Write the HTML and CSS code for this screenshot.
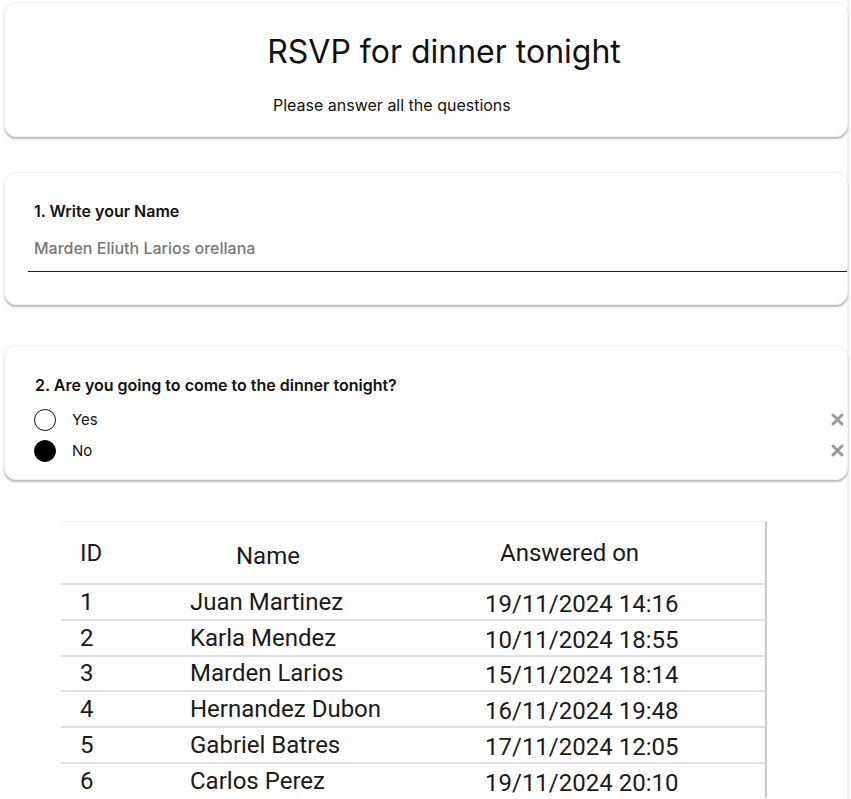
FILE: index.html
```html
<!DOCTYPE html>
<html lang="en">
<head>
<meta charset="utf-8">
<title>RSVP for dinner tonight</title>
<link rel="stylesheet" href="styles.css">
</head>
<body>
<main class="page">
  <section class="card card-head">
    <h1 class="title">RSVP for dinner tonight</h1>
    <p class="subtitle">Please answer all the questions</p>
  </section>

  <section class="card card-q1">
    <label class="q-label">1. Write your Name</label>
    <div class="answer">Marden Eliuth Larios orellana</div>
  </section>

  <section class="card card-q2">
    <div class="q-label">2. Are you going to come to the dinner tonight?</div>
    <div class="option">
      <span class="radio"></span>
      <span class="opt-text">Yes</span>
      <svg class="remove" width="13" height="13" viewBox="0 0 13 13"><path d="M2 2L11 11M11 2L2 11" stroke="#9a9a9a" stroke-width="3" stroke-linecap="round"/></svg>
    </div>
    <div class="option">
      <span class="radio radio-on"></span>
      <span class="opt-text">No</span>
      <svg class="remove" width="13" height="13" viewBox="0 0 13 13"><path d="M2 2L11 11M11 2L2 11" stroke="#9a9a9a" stroke-width="3" stroke-linecap="round"/></svg>
    </div>
  </section>

  <section class="table">
    <div class="row row-head">
      <div class="c c-id">ID</div>
      <div class="c c-name h-name">Name</div>
      <div class="c c-date h-date">Answered on</div>
    </div>
    <div class="row"><div class="c c-id">1</div><div class="c c-name">Juan Martinez</div><div class="c c-date">19/11/2024 14:16</div></div>
    <div class="row"><div class="c c-id">2</div><div class="c c-name">Karla Mendez</div><div class="c c-date">10/11/2024 18:55</div></div>
    <div class="row"><div class="c c-id">3</div><div class="c c-name">Marden Larios</div><div class="c c-date">15/11/2024 18:14</div></div>
    <div class="row"><div class="c c-id">4</div><div class="c c-name">Hernandez Dubon</div><div class="c c-date">16/11/2024 19:48</div></div>
    <div class="row"><div class="c c-id">5</div><div class="c c-name">Gabriel Batres</div><div class="c c-date">17/11/2024 12:05</div></div>
    <div class="row"><div class="c c-id">6</div><div class="c c-name">Carlos Perez</div><div class="c c-date">19/11/2024 20:10</div></div>
  </section>
</main>
</body>
</html>
```

FILE: styles.css
```css
html, body {
  margin: 0;
  padding: 0;
  background: #ffffff;
}

body {
  font-family: Inter, "Noto Sans", sans-serif;
  color: #111;
  overflow: hidden;
}

.page {
  display: flex;
  flex-direction: column;
  padding-top: 2px;
  border-right: 2px solid #f7eefa;
  width: 849px;
  min-height: 799px;
  box-sizing: border-box;
}

.card {
  margin-left: 4px;
  width: 844px;
  box-sizing: border-box;
  background: #fff;
  border: 1px solid #f3f0f5;
  border-radius: 12px;
  box-shadow: 0 2px 2px rgba(60, 50, 70, 0.35);
}

.card-head {
  height: 135px;
  padding-top: 30px;
}

.title {
  margin: 0;
  padding-left: 36px;
  text-align: center;
  font-size: 32px;
  font-weight: 400;
  line-height: 38px;
  letter-spacing: 0;
}

.subtitle {
  margin: 24px 0 0 268px;
  font-size: 16px;
  line-height: 20px;
  font-weight: 400;
}

.card-q1 {
  margin-top: 35px;
  height: 133px;
  padding: 28px 0 0 23px;
}

.q-label {
  display: block;
  font-size: 16px;
  font-weight: 600;
  line-height: 20px;
  margin-left: 6px;
}

.answer {
  margin-top: 17px;
  font-size: 16px;
  font-weight: 500;
  color: #777;
  line-height: 20px;
  padding: 0 0 13px 6px;
  border-bottom: 1px solid #222;
}

.card-q2 {
  margin-top: 40px;
  height: 135px;
  padding: 29px 0 0 29px;
}

.card-q2 .q-label {
  margin-left: 1px;
  margin-bottom: 9px;
}

.option {
  display: flex;
  align-items: center;
  height: 31px;
  padding-right: 3px;
}

.radio {
  width: 22px;
  height: 22px;
  box-sizing: border-box;
  border: 1.5px solid #111;
  border-radius: 50%;
  flex: none;
}

.radio-on {
  background: #000;
  border-color: #000;
}

.opt-text {
  margin-left: 16px;
  font-size: 15px;
  flex: 1;
}

.remove {
  flex: none;
}

.table {
  margin: 41px 0 0 61px;
  width: 706px;
  box-sizing: border-box;
  border-right: 2px solid #c9c9c9;
  border-top: 1px solid #f4f2f5;
  font-family: Roboto, "Liberation Sans", sans-serif;
  color: #1a1a1a;
}

.row {
  display: grid;
  grid-template-columns: 110px 295px 1fr;
  height: 35.8px;
  box-sizing: border-box;
  border-top: 2px solid #e2dde6;
  align-items: center;
  font-size: 24px;
}

.row-head {
  height: 61px;
  border-top: none;
}

.c {
  padding-left: 19px;
  white-space: nowrap;
}

.c-date {
  padding-top: 4px;
}

.h-name {
  padding-left: 65px;
  padding-top: 6px;
}

.h-date {
  padding-left: 34px;
  padding-top: 0;
}
```
